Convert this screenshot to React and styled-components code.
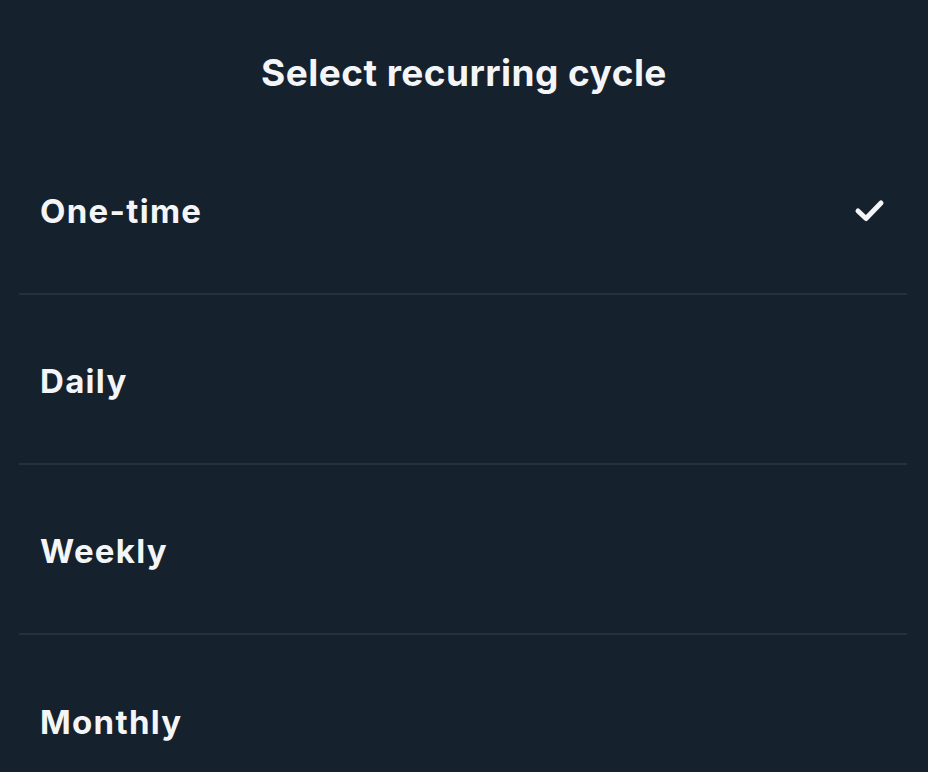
import React from "react";
import styled, { createGlobalStyle } from "styled-components";

const Global = createGlobalStyle`
  html, body { margin: 0; padding: 0; background: #16212e; }
  body { font-family: Inter, "Noto Sans", sans-serif; -webkit-font-smoothing: antialiased; }
`;

const Screen = styled.div`
  width: 928px;
  height: 772px;
  background: #16212e;
  color: #f4f5f7;
  overflow: hidden;
  display: flex;
  flex-direction: column;
`;

const Header = styled.header`
  flex: 0 0 125px;
  display: flex;
  justify-content: center;
  padding-top: 51px;
  box-sizing: border-box;
`;

const Title = styled.h1`
  margin: 0;
  font-size: 37px;
  line-height: 44px;
  font-weight: 700;
  letter-spacing: 0.45px;
`;

const List = styled.ul`
  list-style: none;
  margin: 0;
  padding: 0 21px 0 19px;
  flex-shrink: 0;
`;

const Row = styled.li`
  height: 170px;
  box-sizing: border-box;
  display: flex;
  align-items: center;
  justify-content: space-between;
  padding: 3px 21px 0 21px;
  border-bottom: ${(p) => (p.$last ? "none" : "2px solid #26313d")};
`;

const Label = styled.span`
  font-size: 33px;
  font-weight: 700;
  line-height: 40px;
  letter-spacing: 1.3px;
`;

const Check = () => (
  <svg width="32" height="24" viewBox="0 0 32 24" fill="none">
    <polyline
      points="4,12 12,19.5 27,4"
      stroke="#f4f5f7"
      strokeWidth="5"
      strokeLinecap="round"
      strokeLinejoin="round"
    />
  </svg>
);

const options = ["One-time", "Daily", "Weekly", "Monthly"];

export default function App() {
  return (
    <Screen>
      <Global />
      <Header>
        <Title>Select recurring cycle</Title>
      </Header>
      <List>
        {options.map((o, i) => (
          <Row key={o} $last={i === options.length - 1}>
            <Label>{o}</Label>
            {i === 0 && <Check />}
          </Row>
        ))}
      </List>
    </Screen>
  );
}
